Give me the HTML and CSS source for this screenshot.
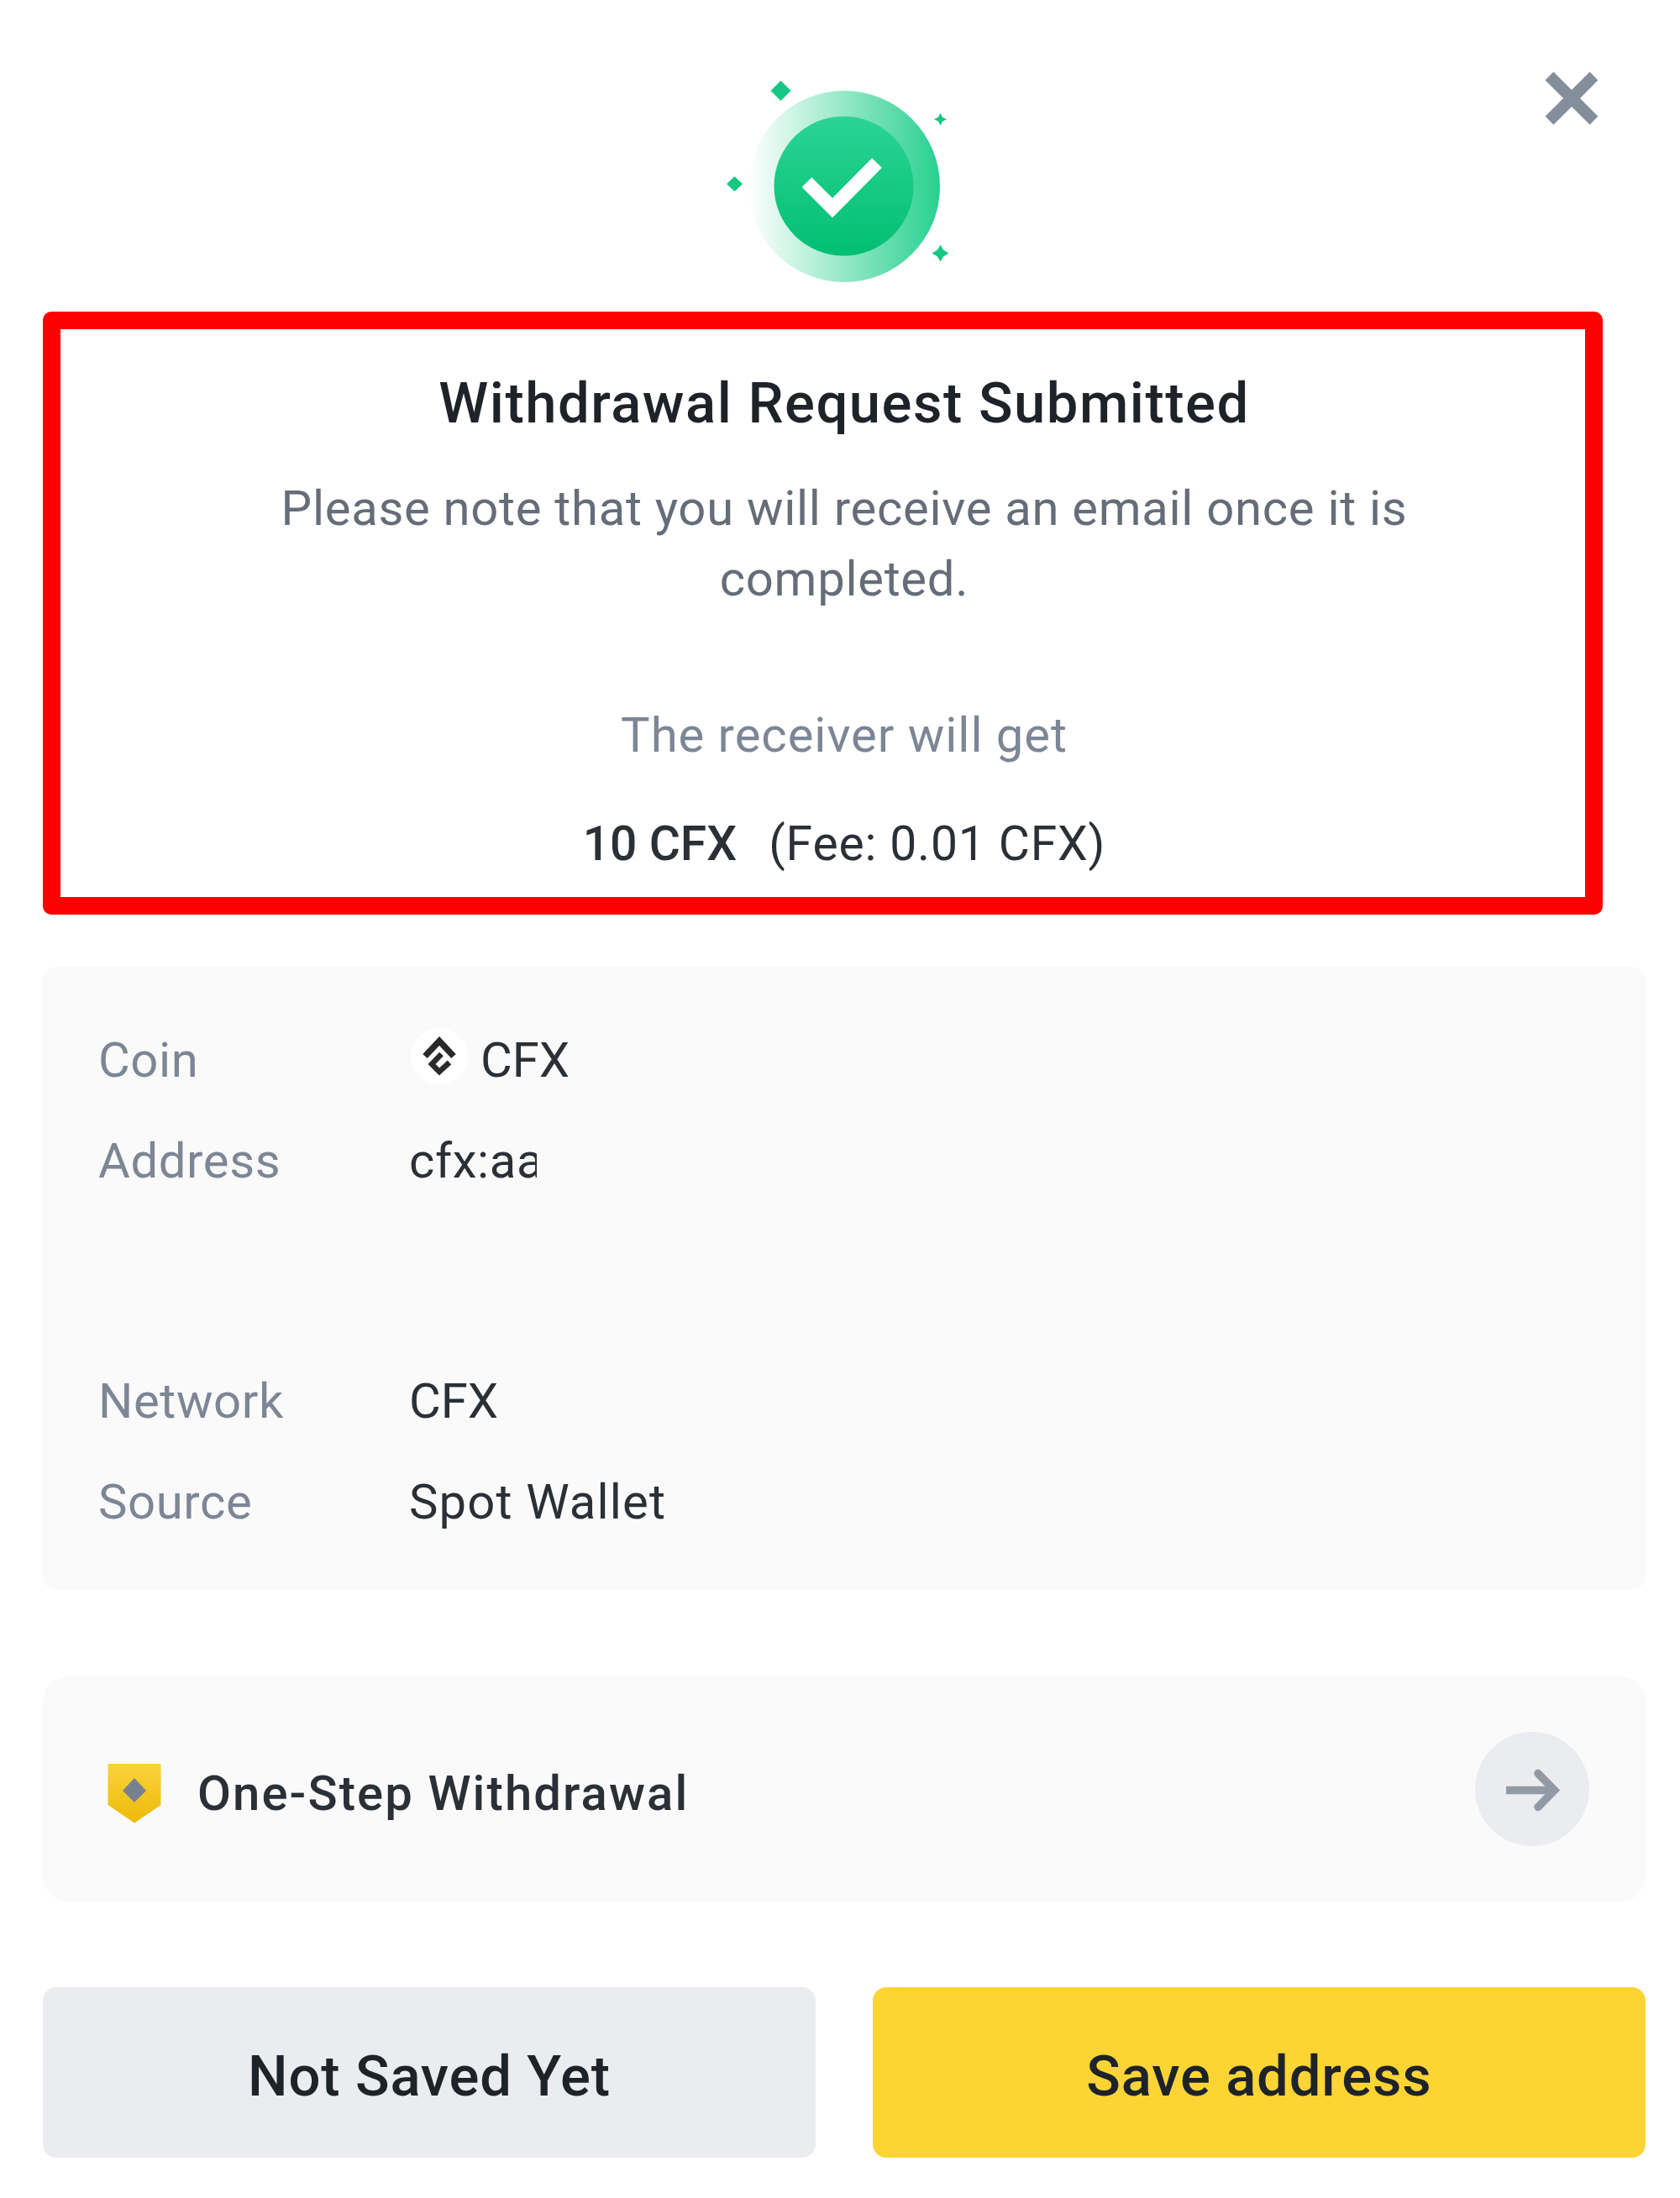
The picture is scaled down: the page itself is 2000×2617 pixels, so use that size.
FILE: index.html
```html
<!DOCTYPE html>
<html lang="en">
<head>
<meta charset="utf-8">
<title>Withdrawal Request Submitted</title>
<link rel="stylesheet" href="styles.css">
</head>
<body>
<main class="dialog">
  <header class="hero">
    <svg class="success" viewBox="860 90 280 260" width="280" height="260" aria-hidden="true">
      <defs>
        <linearGradient id="halo" x1="0" x2="1" y1="0" y2="0">
          <stop offset="0" stop-color="#2ed191" stop-opacity="0"/>
          <stop offset="1" stop-color="#27d08e"/>
        </linearGradient>
        <linearGradient id="disc" x1="0" x2="0" y1="0" y2="1">
          <stop offset="0" stop-color="#2bd494"/>
          <stop offset="1" stop-color="#02bf73"/>
        </linearGradient>
      </defs>
      <circle cx="1006" cy="222" r="114" fill="url(#halo)"/>
      <circle cx="1005.500" cy="221.500" r="83" fill="url(#disc)"/>
      <path d="M961.500 217 992 247.500 1045 194" fill="none" stroke="#fff" stroke-width="16.500"/>
      <path d="M930.500 96l12 12-12 12-12-12zM1120.500 134.500l2.500 5 5 2.500-5 2.500-2.500 5-2.500-5-5-2.500 5-2.500zM875.500 210l9.500 9-9.500 9-9.500-9zM1120.500 291.500l3.500 6 6.500 4-6.500 4-3.500 6-3.500-6-6.500-4 6.500-4z" fill="#16c784"/>
    </svg>
    <button class="close" aria-label="Close">
      <svg viewBox="0 0 64 64" width="64" height="64"><path d="M5.500 5.500l53 53M58.500 5.500l-53 53" stroke="#848e9c" stroke-width="14"/></svg>
    </button>
  </header>

  <section class="summary">
    <h1 class="title">Withdrawal Request Submitted</h1>
    <p class="note">Please note that you will receive an email once it is<br>completed.</p>
    <p class="receiver">The receiver will get</p>
    <p class="amount"><strong class="total">10 CFX</strong><span class="fee">(Fee: 0.01 CFX)</span></p>
  </section>

  <dl class="details">
    <dt>Coin</dt>
    <dd class="coin">
      <svg viewBox="486 1222 72 72" width="72" height="72" aria-hidden="true">
        <circle cx="523" cy="1258" r="34" fill="#fff"/>
        <path d="M506 1257.500 523 1239.500l17 18" fill="none" stroke="#2a2a2a" stroke-width="7.500"/>
        <path d="M525.500 1255 514 1267l9 9 12-11" fill="none" stroke="#2a2a2a" stroke-width="6.500"/>
      </svg>
      <span>CFX</span>
    </dd>
    <dt>Address</dt>
    <dd><span class="address">cfx:aa</span></dd>
    <dt>Network</dt>
    <dd>CFX</dd>
    <dt>Source</dt>
    <dd class="source">Spot Wallet</dd>
  </dl>

  <section class="one-step">
    <svg class="shield" viewBox="0 0 64 72" width="64" height="72" aria-hidden="true">
      <defs><linearGradient id="gold" x1="0" x2="0" y1="0" y2="1"><stop offset="0" stop-color="#f8d33a"/><stop offset="1" stop-color="#f0b90b"/></linearGradient></defs>
      <path d="M.5 1h63v49L32 71.500.5 50z" fill="url(#gold)"/>
      <path d="M32 18l14 15-14 14-14-14z" fill="#76808f"/>
    </svg>
    <h2 class="one-step-title">One-Step Withdrawal</h2>
    <button class="go" aria-label="Open">
      <svg viewBox="0 0 136 136" width="136" height="136"><path d="M37 69.500h54" stroke="#929aa5" stroke-width="9.500"/><path d="M75 49.500 94.500 69.500 75 89.500" fill="none" stroke="#929aa5" stroke-width="9.500" stroke-linecap="round"/></svg>
    </button>
  </section>

  <footer class="actions">
    <button class="action">Not Saved Yet</button>
    <button class="action primary">Save address</button>
  </footer>
</main>
</body>
</html>
```
FILE: styles.css
```css
* { box-sizing: border-box; margin: 0; padding: 0; }

body {
  background: #fff;
  color: #2b3036;
  font: 400 58px/80px Roboto, "Liberation Sans", sans-serif;
}

button { border: 0; background: none; color: inherit; font: inherit; display: block; }
svg { display: block; }

.dialog { padding: 0 41px 48px 51px; }

.hero { position: relative; height: 371px; padding: 90px 0 0 808px; }
.close { position: absolute; top: 85px; right: 56px; }

.summary {
  width: 1857px;
  height: 718px;
  padding: 48px 0 0 51px;
  border: 21px solid #f00;
  border-radius: 10px;
  text-align: center;
}
.title { color: #1e2329; font-size: 67px; font-weight: 500; line-height: 80px; letter-spacing: 1.5px; }
.note { margin-top: 44px; line-height: 83.5px; letter-spacing: .7px; color: #666d79; }
.receiver { margin-top: 104px; letter-spacing: .95px; color: #7d8695; }
.amount { display: flex; justify-content: center; gap: 38px; margin-top: 50px; font-size: 57px; }
.total { font-weight: 500; }
.fee { letter-spacing: .85px; }

.details {
  display: grid;
  grid-template-columns: 370px 1fr;
  grid-template-rows: 120px 286px 120px 120px;
  height: 742px;
  margin-top: 62px;
  padding: 71px 67px 0 66px;
  border-radius: 16px;
  background: #fafafa;
}
.details dt { letter-spacing: .6px; color: #7d8695; }
.coin { display: flex; gap: 14px; margin-left: -1px; }
.address { display: block; width: 152px; overflow: hidden; letter-spacing: .6px; }
.source { letter-spacing: 1.15px; }

.one-step {
  display: flex;
  align-items: center;
  height: 270px;
  margin-top: 102px;
  padding: 0 67px 0 77px;
  border-radius: 32px;
  background: #fafafa;
}
.shield { margin-top: 9px; }
.one-step-title { margin: 9px auto 0 43px; font-size: 58px; font-weight: 500; letter-spacing: 2.1px; }
.go { border-radius: 50%; background: #eaecef; }

.actions { display: flex; gap: 68px; margin-top: 101px; }
.action {
  flex: 1;
  height: 203px;
  padding-top: 8px;
  border-radius: 16px;
  background: #eaecef;
  color: #1e2329;
  font-size: 67px;
  font-weight: 500;
  letter-spacing: .85px;
}
.primary { background: #fcd535; }
```
